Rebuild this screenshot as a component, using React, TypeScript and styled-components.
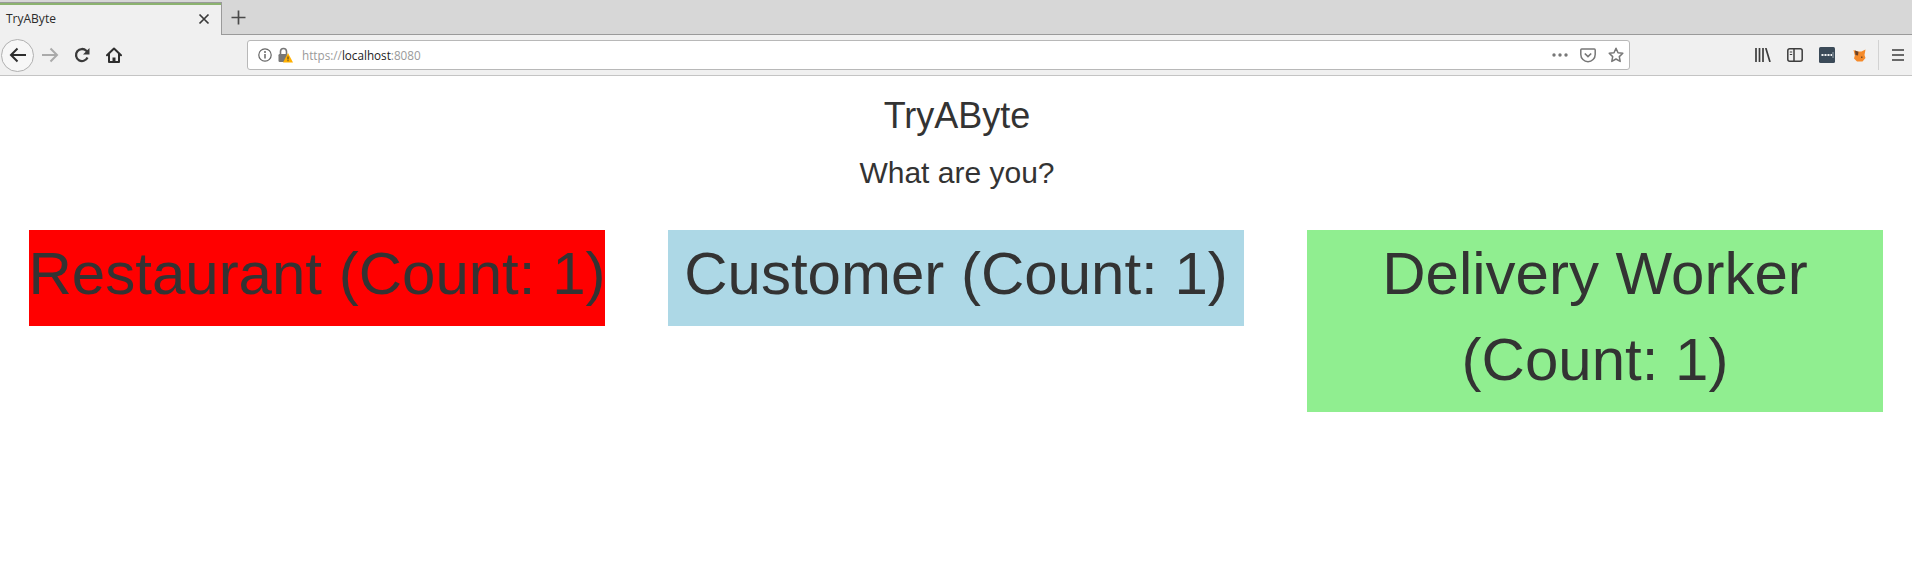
import styled, { createGlobalStyle } from 'styled-components'

const GlobalStyle = createGlobalStyle`
  html, body {
    margin: 0;
    padding: 0;
    background: #fff;
  }
  body {
    font-family: 'Liberation Sans', Arial, sans-serif;
    color: #333;
    overflow: hidden;
  }
`

const roles = [
  { label: 'Restaurant (Count: 1)', color: '#ff0000', nowrap: true },
  { label: 'Customer (Count: 1)', color: '#add8e6', nowrap: false },
  { label: 'Delivery Worker (Count: 1)', color: '#90ee90', nowrap: false },
]

function App() {
  return (
    <>
      <GlobalStyle />
      <Browser>
        <TabStrip>
          <Tab>
            <TabTitle>TryAByte</TabTitle>
            <svg width="12" height="12" viewBox="0 0 12 12">
              <path d="M1.500 1.500l9 9M10.500 1.500l-9 9" stroke="#3a3a3a" strokeWidth="1.700" />
            </svg>
          </Tab>
          <NewTab>
            <svg width="15" height="15" viewBox="0 0 15 15">
              <path d="M7.500 0.500v14M0.500 7.500h14" stroke="#4a4a4a" strokeWidth="1.700" />
            </svg>
          </NewTab>
        </TabStrip>
        <Toolbar>
          <NavGroup>
            <BackButton>
              <svg width="18" height="16" viewBox="0 0 18 16">
                <path d="M17 8H2M8.500 1.500L2 8l6.500 6.500" fill="none" stroke="#2e2e2e" strokeWidth="2" />
              </svg>
            </BackButton>
            <NavButton>
              <svg width="18" height="16" viewBox="0 0 18 16">
                <path d="M1 8h15M9.500 1.500L16 8l-6.500 6.500" fill="none" stroke="#aaaaaa" strokeWidth="2" />
              </svg>
            </NavButton>
            <NavButton>
              <svg width="16" height="16" viewBox="0 0 16 16">
                <path d="M13.500 10.500A6 6 0 1 1 12.300 3.800L14 5.600" fill="none" stroke="#3a3a3a" strokeWidth="2.300" />
                <path d="M15.500 1v6.500H9z" fill="#3a3a3a" />
              </svg>
            </NavButton>
            <NavButton>
              <svg width="16" height="16" viewBox="0 0 16 16">
                <path d="M1 8.200L8 1.500l7 6.700M3 7v8h10V7" fill="none" stroke="#2e2e2e" strokeWidth="2" strokeLinejoin="round" strokeLinecap="round" />
                <path d="M6.500 15v-4.500h3V15z" fill="#2e2e2e" />
              </svg>
            </NavButton>
          </NavGroup>
          <UrlBar>
            <UrlIcons>
              <svg width="14" height="14" viewBox="0 0 14 14">
                <circle cx="7" cy="7" r="6.200" fill="none" stroke="#666" strokeWidth="1.200" />
                <path d="M7 6v4.500" stroke="#666" strokeWidth="1.500" />
                <circle cx="7" cy="3.900" r="1" fill="#666" />
              </svg>
              <svg width="15" height="16" viewBox="0 0 15 16">
                <path d="M2.500 7V4.500a3 3 0 0 1 6 0V7" fill="none" stroke="#777" strokeWidth="1.600" />
                <rect x="0.500" y="7" width="9" height="8" rx="1.200" fill="#777" />
                <path d="M10 6l5 9.500H5z" fill="#ffb000" />
                <path d="M10 9.500v3M10 13.200v1" stroke="#333" strokeWidth="1" />
              </svg>
            </UrlIcons>
            <UrlText>
              https://<UrlHost>localhost</UrlHost>:8080
            </UrlText>
            <PageActions>
              <svg width="16" height="4" viewBox="0 0 16 4">
                <circle cx="2" cy="2" r="1.700" fill="#777" />
                <circle cx="8" cy="2" r="1.700" fill="#777" />
                <circle cx="14" cy="2" r="1.700" fill="#777" />
              </svg>
              <svg width="16" height="15" viewBox="0 0 16 15">
                <path d="M1.700 1h12.600a.9.9 0 0 1 .9.9V6.500a7.200 7.200 0 0 1-14.400 0V1.900a.9.9 0 0 1 .9-.9z" fill="none" stroke="#777" strokeWidth="1.500" />
                <path d="M4.800 5.500L8 8.600l3.200-3.100" fill="none" stroke="#777" strokeWidth="1.700" />
              </svg>
              <svg width="16" height="16" viewBox="0 0 16 16">
                <path d="M8 1.300l2 4.400 4.800.6-3.500 3.300.9 4.800L8 12l-4.200 2.400.9-4.800L1.200 6.300 6 5.700z" fill="none" stroke="#777" strokeWidth="1.500" strokeLinejoin="round" />
              </svg>
            </PageActions>
          </UrlBar>
          <ToolIcons>
            <ToolIcon>
              <svg width="16" height="14" viewBox="0 0 16 14">
                <path d="M1 0v14M4.500 0v14M8 0v14M10.800 0l4.200 14" stroke="#3d3d3d" strokeWidth="1.700" />
              </svg>
            </ToolIcon>
            <ToolIcon>
              <svg width="16" height="14" viewBox="0 0 16 14">
                <rect x="0.800" y="0.800" width="14.400" height="12.400" rx="2" fill="none" stroke="#3d3d3d" strokeWidth="1.500" />
                <path d="M7 1v12" stroke="#3d3d3d" strokeWidth="1.500" />
                <path d="M2.800 4h2.400M2.800 6.500h2.400" stroke="#3d3d3d" strokeWidth="1" />
              </svg>
            </ToolIcon>
            <ToolIcon>
              <svg width="16" height="16" viewBox="0 0 16 16">
                <rect width="16" height="16" rx="1.500" fill="#3b4a58" />
                <path d="M2.500 7h2v2h-2zM5.500 7h2v2h-2zM8.500 7h2v2h-2zM11.500 7h1.500v2h-1.500z" fill="#f2f2f2" />
                <path d="M14 5v6" stroke="#9aa5ae" strokeWidth="1" />
              </svg>
            </ToolIcon>
            <ToolIcon>
              <svg width="13" height="13" viewBox="0 0 13 13">
                <path d="M0.500 1l4 1.500h4L12.500 0.500 11.500 6l1 3-3 3.500H4L1 9.500l.8-3z" fill="#f58a2a" />
                <path d="M2 1.500l3.500 1.200L5 6.500 2.500 6z" fill="#6b4226" />
                <path d="M8 7.500h1.500v1.500H8z" fill="#7a4a20" />
              </svg>
            </ToolIcon>
          </ToolIcons>
          <Divider />
          <MenuButton>
            <svg width="12" height="12" viewBox="0 0 12 12">
              <path d="M0 1h12M0 6h12M0 11h12" stroke="#3d3d3d" strokeWidth="1.700" />
            </svg>
          </MenuButton>
        </Toolbar>
      </Browser>
      <Page>
        <Title>TryAByte</Title>
        <Subtitle>What are you?</Subtitle>
        <RoleGrid>
          {roles.map((role) => (
            <RoleButton key={role.label} $color={role.color} $nowrap={role.nowrap}>
              {role.label}
            </RoleButton>
          ))}
        </RoleGrid>
      </Page>
    </>
  )
}

const Browser = styled.div`
  font-family: 'Open Sans', 'Noto Sans', sans-serif;
`
const TabStrip = styled.div`
  display: flex;
  align-items: flex-start;
  height: 35px;
  box-sizing: border-box;
  padding-top: 2px;
  background: #d7d7d7;
  border-bottom: 1px solid #9a9a9a;
`
const Tab = styled.div`
  display: flex;
  align-items: center;
  justify-content: space-between;
  flex-shrink: 0;
  width: 222px;
  height: 33px;
  box-sizing: border-box;
  padding: 0 11px 0 6px;
  background: linear-gradient(#9a9a9a 1px, #8cb36f 1px, #8cb36f 3px, #f0f0f0 3px);
  border-right: 1px solid #9a9a9a;
`
const TabTitle = styled.span`
  font-size: 12px;
  color: #2a2a2a;
`
const NewTab = styled.div`
  display: flex;
  align-items: center;
  justify-content: center;
  width: 33px;
  height: 31px;
`
const Toolbar = styled.div`
  display: flex;
  align-items: center;
  height: 41px;
  box-sizing: border-box;
  background: #f0f0f0;
  border-bottom: 1px solid #c4c4c4;
`
const NavGroup = styled.div`
  display: flex;
  align-items: center;
  flex-shrink: 0;
  width: 247px;
  padding-left: 1px;
  box-sizing: border-box;
`
const BackButton = styled.div`
  display: flex;
  align-items: center;
  justify-content: center;
  width: 33px;
  height: 33px;
  box-sizing: border-box;
  border: 1px solid #b0b0b0;
  border-radius: 50%;
  background: #f7f7f7;
`
const NavButton = styled.div`
  display: flex;
  align-items: center;
  justify-content: center;
  width: 32px;
  height: 32px;
`
const UrlBar = styled.div`
  display: flex;
  align-items: center;
  flex-shrink: 0;
  width: 1383px;
  height: 30px;
  box-sizing: border-box;
  padding: 0 5px 0 10px;
  background: #fff;
  border: 1px solid #b8b8b8;
  border-radius: 3px;
`
const UrlIcons = styled.div`
  display: flex;
  align-items: center;
  gap: 6px;
  margin-right: 9px;
`
const UrlText = styled.div`
  flex: 1;
  font-size: 11.7px;
  color: #9a9a9a;
`
const UrlHost = styled.span`
  color: #222;
`
const PageActions = styled.div`
  display: flex;
  align-items: center;
  gap: 12px;
`
const ToolIcons = styled.div`
  display: flex;
  align-items: center;
  flex-shrink: 0;
  margin-left: 117px;
`
const ToolIcon = styled.div`
  display: flex;
  align-items: center;
  justify-content: center;
  width: 32px;
`
const Divider = styled.div`
  flex-shrink: 0;
  width: 1px;
  height: 30px;
  margin-left: 3px;
  background: #d2d2d2;
`
const MenuButton = styled.div`
  display: flex;
  align-items: center;
  margin-left: 13px;
`
const Page = styled.main`
  text-align: center;
`
const Title = styled.h1`
  margin: 20px 0 20px;
  padding-left: 2px;
  font-size: 36px;
  font-weight: 400;
  line-height: 1.1;
`
const Subtitle = styled.h2`
  margin: 0 0 41px;
  padding-left: 2px;
  font-size: 30px;
  font-weight: 400;
  line-height: 1.1;
`
const RoleGrid = styled.div`
  display: grid;
  grid-template-columns: repeat(3, 576px);
  column-gap: 63px;
  align-items: start;
  padding: 0 29px;
`
const RoleButton = styled.div<{ $color: string; $nowrap: boolean }>`
  display: flex;
  justify-content: center;
  padding: 1px 0 9px;
  background: ${(props) => props.$color};
  font-size: 60px;
  line-height: 86px;
  text-align: center;
  white-space: ${(props) => (props.$nowrap ? 'nowrap' : 'normal')};
`

export default App
